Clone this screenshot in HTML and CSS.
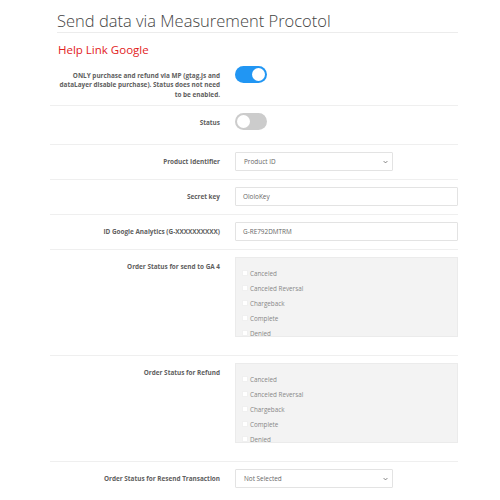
FILE: index.html
```html
<!DOCTYPE html>
<html>
<head>
<meta charset="utf-8">
<link rel="stylesheet" href="styles.css">
</head>
<body>
<div class="page">
  <div class="head">
    <h1 class="title">Send data via Measurement Procotol</h1>
  </div>
  <div class="help">Help Link Google</div>
  <div class="form">
    <div class="row first">
      <div class="label">ONLY purchase and refund via MP (gtag.js and dataLayer disable purchase). Status does not need to be enabled.</div>
      <div class="control"><div class="switch-wrap"><span class="switch on"><span class="knob"></span></span></div></div>
    </div>
    <div class="row">
      <div class="label">Status</div>
      <div class="control"><div class="switch-wrap"><span class="switch"><span class="knob"></span></span></div></div>
    </div>
    <div class="row">
      <div class="label">Product Identifier</div>
      <div class="control"><div class="select"><span>Product ID</span><svg class="chev" viewBox="0 0 8 5" width="5" height="4"><path d="M1 1 L4 4 L7 1" fill="none" stroke="#666" stroke-width="1.3"/></svg></div></div>
    </div>
    <div class="row">
      <div class="label">Secret key</div>
      <div class="control"><div class="input">OloloKey</div></div>
    </div>
    <div class="row">
      <div class="label">ID Google Analytics (G-XXXXXXXXXX)</div>
      <div class="control"><div class="input">G-RE792DMTRM</div></div>
    </div>
    <div class="row tall">
      <div class="label">Order Status for send to GA 4</div>
      <div class="control">
        <div class="checks">
          <div class="item"><span class="box"></span>Canceled</div>
          <div class="item"><span class="box"></span>Canceled Reversal</div>
          <div class="item"><span class="box"></span>Chargeback</div>
          <div class="item"><span class="box"></span>Complete</div>
          <div class="item"><span class="box"></span>Denied</div>
          <div class="item"><span class="box"></span>Expired</div>
        </div>
      </div>
    </div>
    <div class="row tall">
      <div class="label">Order Status for Refund</div>
      <div class="control">
        <div class="checks">
          <div class="item"><span class="box"></span>Canceled</div>
          <div class="item"><span class="box"></span>Canceled Reversal</div>
          <div class="item"><span class="box"></span>Chargeback</div>
          <div class="item"><span class="box"></span>Complete</div>
          <div class="item"><span class="box"></span>Denied</div>
          <div class="item"><span class="box"></span>Expired</div>
        </div>
      </div>
    </div>
    <div class="row">
      <div class="label">Order Status for Resend Transaction</div>
      <div class="control"><div class="select"><span>Not Selected</span><svg class="chev" viewBox="0 0 8 5" width="5" height="4"><path d="M1 1 L4 4 L7 1" fill="none" stroke="#666" stroke-width="1.3"/></svg></div></div>
    </div>
  </div>
</div>
</body>
</html>
```

FILE: styles.css
```css
html, body {
  margin: 0;
  padding: 0;
  background: #fff;
  font-family: "Open Sans", "Noto Sans", sans-serif;
}
.page {
  margin-left: 50px;
  width: 408px;
}
.head {
  margin-left: 7px;
  padding-top: 10px;
  border-bottom: 1px solid #ececec;
}
.title {
  margin: 0;
  font-size: 16.5px;
  line-height: 22px;
  font-weight: 300;
  color: #444;
  height: 22px;
}
.help {
  margin-left: 8px;
  margin-top: 9px;
  font-size: 11.5px;
  line-height: 16px;
  color: #e2211c;
}
.form {
  margin-top: 0;
}
.row {
  display: grid;
  grid-template-columns: 170px 1fr;
  column-gap: 15px;
  padding: 7px 0 8px;
  border-top: 1px solid #efefef;
}
.row.first {
  border-top: none;
  padding-top: 8px;
  padding-bottom: 6px;
}
.row.tall {
  padding-bottom: 18px;
}
.label {
  text-align: right;
  font-size: 6.4px;
  line-height: 9.5px;
  font-weight: 700;
  color: #606060;
  padding-top: 4.5px;
}
.row.first .label {
  padding-left: 4px;
}
.control {
  min-width: 0;
}
.switch-wrap {
  height: 23px;
}
.row.first .switch-wrap {
  height: 17px;
}
.switch {
  display: block;
  position: relative;
  width: 32px;
  height: 17px;
  border-radius: 9px;
  background: #ccc;
}
.switch.on {
  background: #2196f3;
}
.knob {
  position: absolute;
  top: 2px;
  left: 2px;
  width: 13px;
  height: 13px;
  border-radius: 50%;
  background: #fff;
}
.switch.on .knob {
  left: 17px;
}
.select, .input {
  box-sizing: border-box;
  height: 19px;
  border: 1px solid #e3e3e3;
  border-radius: 1px;
  background: #fff;
  display: flex;
  align-items: center;
  padding: 0 8px;
  font-size: 6.4px;
  color: #666;
}
.select {
  width: 158px;
  justify-content: space-between;
  padding-right: 4px;
}
.input {
  width: 100%;
  padding-left: 7px;
}
.chev {
  display: block;
}
.checks {
  box-sizing: border-box;
  height: 80px;
  overflow: hidden;
  background: #f3f3f3;
  border: 1px solid #ebebeb;
  padding: 8px 6px 0;
}
.item {
  display: flex;
  align-items: center;
  height: 15px;
  font-size: 6.3px;
  color: #888;
}
.box {
  box-sizing: border-box;
  width: 6px;
  height: 6px;
  background: #fff;
  border: 1px solid #f0f0f0;
  margin-right: 2px;
  position: relative;
  top: -1px;
}
```
